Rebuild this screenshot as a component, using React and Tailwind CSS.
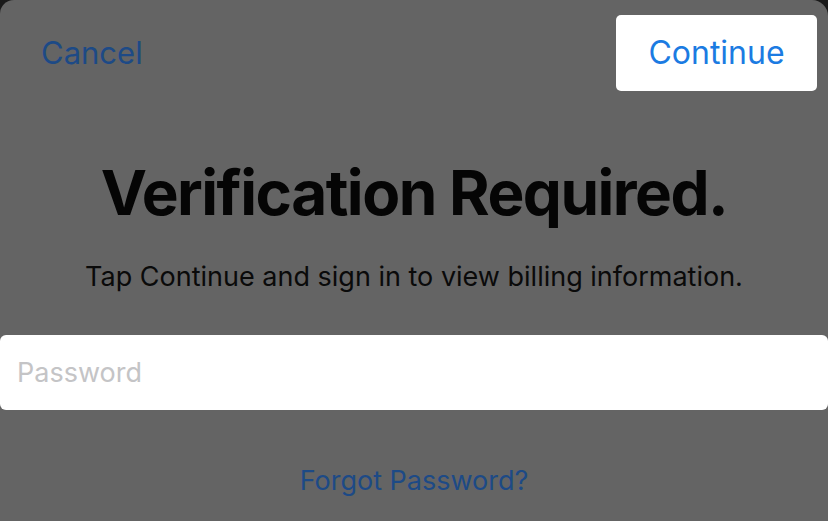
export default function App() {
  return (
    <div className="w-[828px] h-[521px] overflow-hidden bg-[#1a1a1a]">
      <div
        className="h-full bg-[#646464] rounded-tl-[14px] rounded-tr-[16px] flex flex-col"
        style={{ fontFamily: 'Inter, "Noto Sans", sans-serif' }}
      >
        {/* Barra superior */}
        <div className="flex items-center justify-between pt-[15px] pl-[41px] pr-[11px]">
          <span className="text-[31px] leading-none text-[#1d4a86] -mt-[2px]">Cancel</span>
          <button className="w-[201px] h-[76px] bg-white rounded-[5px] text-[32px] leading-none text-[#1b7be2]">
            Continue
          </button>
        </div>

        <h1 className="mt-[71px] text-center text-[62px] leading-none font-bold text-[#050505] tracking-[-1.5px]">
          Verification Required.
        </h1>

        <p className="mt-[39px] text-center text-[27px] leading-none text-[#0a0a0a]">
          Tap Continue and sign in to view billing information.
        </p>

        <div className="mt-[45px] h-[75px] bg-white rounded-[6px] flex items-center pl-[17px]">
          <span className="text-[27px] leading-none text-[#c4c4c6]">Password</span>
        </div>

        <div className="mt-[57px] text-center text-[27px] leading-none text-[#1d4a86]">
          Forgot Password?
        </div>
      </div>
    </div>
  );
}
